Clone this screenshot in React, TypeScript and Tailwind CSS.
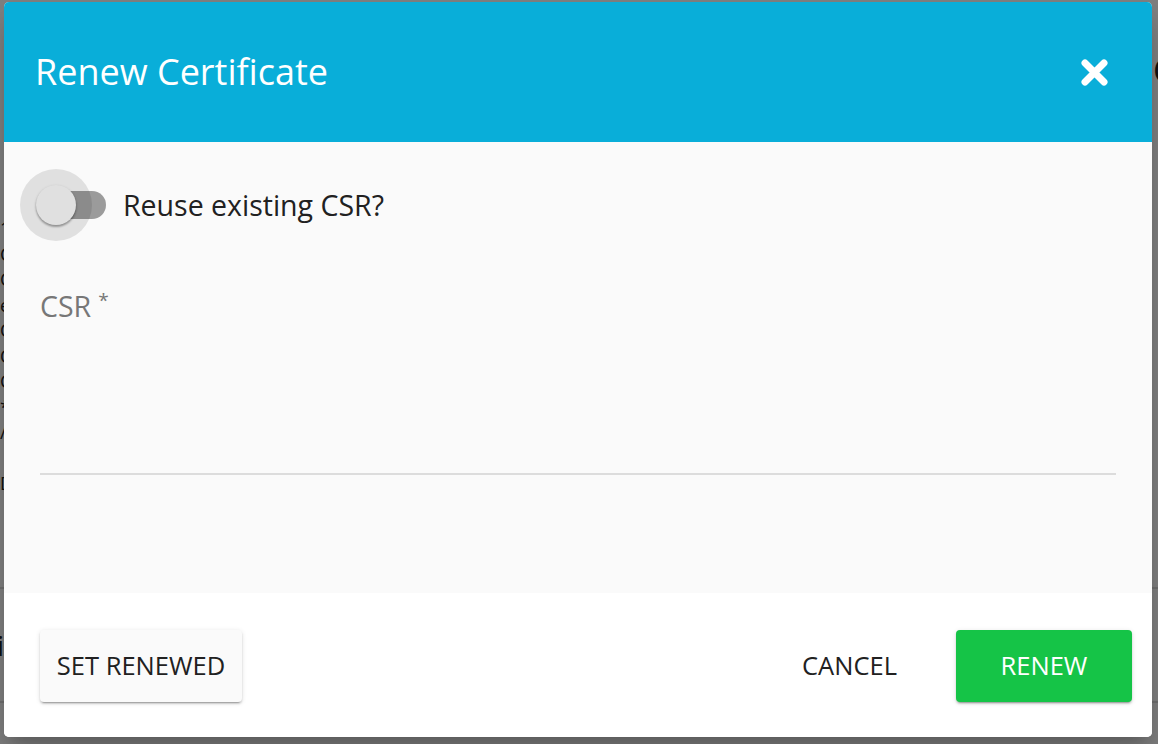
import React from "react";

function CloseIcon() {
  return (
    <svg width="27" height="27" viewBox="0 0 27 27" aria-hidden="true">
      <path d="M4 4 L23 23 M23 4 L4 23" stroke="#ffffff" strokeWidth="7" strokeLinecap="round" fill="none" />
    </svg>
  );
}

function Switch() {
  return (
    <div className="relative w-[86px] h-[72px] shrink-0">
      <div className="absolute left-[20px] top-[22px] w-[66px] h-[28px] rounded-full bg-black/[0.38]" />
      <div className="absolute left-[16px] top-[16px] w-[40px] h-[40px] rounded-full bg-[#fafafa] shadow-[0_2px_2px_rgba(0,0,0,0.24),0_1px_3px_rgba(0,0,0,0.2)]" />
      <div className="absolute left-0 top-0 w-[72px] h-[72px] rounded-full bg-black/[0.1]" />
    </div>
  );
}

function BackgroundPage() {
  const lines = ["1", "Common", "Country", "email", "Organization", "Organizational", "Created", "*", "/", "", "Description"];
  return (
    <div className="w-[1158px] h-[744px] overflow-hidden bg-white flex flex-col text-[#222]" style={{ fontFamily: '"Open Sans", sans-serif' }}>
      <div className="h-[140px] flex items-center pl-[1153px] shrink-0">
        <span className="text-[34px] whitespace-nowrap">Certificates</span>
      </div>
      <div className="flex flex-col pt-[76px] text-[18px] leading-[25px] whitespace-nowrap">
        {lines.map((l, i) => (
          <div key={i} className="h-[25.5px]">{l || "\u00a0"}</div>
        ))}
      </div>
      <div className="mt-[90px] border-t-2 border-[#dddddd]" />
      <div className="h-[112px] flex items-center text-[28px] whitespace-nowrap">
        <span className="-ml-[3px]">id</span>
      </div>
      <div className="border-t-2 border-[#dddddd]" />
    </div>
  );
}

export default function App() {
  return (
    <div className="relative w-[1158px] h-[744px] overflow-hidden">
      <BackgroundPage />
      <div className="absolute inset-0 bg-black/50 pl-[4px] pt-[2px]">
        <div
          className="w-[1148px] h-[735px] rounded-[5px] overflow-hidden bg-white flex flex-col shadow-[0_11px_15px_-7px_rgba(0,0,0,0.2),0_24px_38px_3px_rgba(0,0,0,0.14)]"
          style={{ fontFamily: '"Open Sans", sans-serif' }}
        >
          <div className="h-[140px] shrink-0 bg-[#09aed9] flex items-center justify-between pl-[31px] pr-[44px]">
            <h2 className="text-[36px] leading-none text-white font-normal">Renew Certificate</h2>
            <button className="w-[27px] h-[27px] flex items-center justify-center">
              <CloseIcon />
            </button>
          </div>
          <div className="h-[451px] shrink-0 bg-[#fafafa] flex flex-col pt-[27px] px-[36px]">
            <div className="flex items-center -ml-[20px] gap-[17px]">
              <Switch />
              <span className="text-[28.5px] leading-none text-[#212121]">Reuse existing CSR?</span>
            </div>
            <div className="mt-[51px] flex flex-col">
              <label className="text-[28.5px] leading-none text-[#777777]">
                CSR<span className="text-[19px] align-top ml-[7px] relative top-[-1px]">*</span>
              </label>
              <div className="h-[152px]" />
              <div className="h-[2px] bg-[#dcdcdc]" />
            </div>
          </div>
          <div className="flex-1 bg-white flex items-start justify-between pt-[37px] pl-[36px] pr-[20px]">
            <button className="h-[72px] w-[202px] rounded-[4px] bg-[#fafafa] text-[25.5px] leading-none text-[#212121] shadow-[0_3px_1px_-2px_rgba(0,0,0,0.2),0_2px_2px_0_rgba(0,0,0,0.14),0_1px_5px_0_rgba(0,0,0,0.12)]">
              SET RENEWED
            </button>
            <div className="flex items-center gap-[35px]">
              <button className="h-[72px] px-[24px] text-[25.5px] leading-none text-[#212121]">CANCEL</button>
              <button className="h-[72px] w-[176px] rounded-[4px] bg-[#15c447] text-[25.5px] leading-none text-white shadow-[0_3px_1px_-2px_rgba(0,0,0,0.2),0_2px_2px_0_rgba(0,0,0,0.14),0_1px_5px_0_rgba(0,0,0,0.12)]">
                RENEW
              </button>
            </div>
          </div>
        </div>
      </div>
    </div>
  );
}
